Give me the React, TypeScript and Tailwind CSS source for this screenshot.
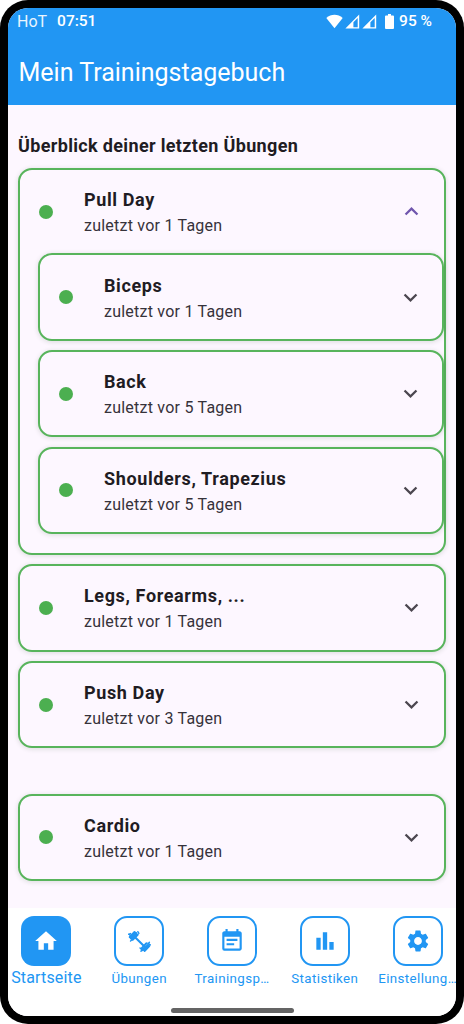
import React from "react";
import { MdBarChart, MdEventNote, MdExpandLess, MdExpandMore, MdHome, MdSettings } from "react-icons/md";

function Dumbbell() {
  return (
    <svg viewBox="0 0 24 24" className="h-[25px] w-[25px]" fill="none" stroke="currentColor" strokeLinecap="round">
      <path d="M7 7.2 17 17" strokeWidth="2" />
      <path d="M3.9 9.1 8.8 3.9M2.7 7.8 7.3 3M5.4 10.2 10.2 5.4" strokeWidth="2.1" />
      <path d="M2 5 3.7 6.6M10.4 2.6 11.4 4.2M1.6 5 3.4 4.4M3.4 11.5 4.8 10.3" strokeWidth="1.4" />
      <path d="M14 18.6 18.5 13.8M15.5 20 20.1 15.3M17 21 21.3 16.4" strokeWidth="2.1" />
      <path d="M13.4 21.4 14.4 20.1M21.5 12.8 20.4 14.1M12.5 18.3 15 20.5M20 13.7 22.4 15.3" strokeWidth="1.4" />
    </svg>
  );
}

function Signal() {
  return (
    <svg viewBox="0 0 15 15" className="h-[15px] w-[15px]" fill="currentColor">
      <path fillRule="evenodd" d="M.4 14.5 14.2.5v14H.4ZM8.4 8.2v5.1H12.7V4L8.4 8.2Z" />
    </svg>
  );
}

function StatusBar() {
  return (
    <div className="flex h-[26px] items-center pl-[9px] pr-[24px] text-white">
      <span className="relative top-px text-[16px] opacity-90">HoT</span>
      <span className="relative top-px ml-[10px] text-[15.5px] font-medium">07:51</span>
      <div className="ml-auto flex items-center">
        <svg viewBox="0 0 17 15" className="h-[15px] w-[17px]" fill="currentColor">
          <path d="M.3 4C5-.4 12-.4 16.7 4L8.5 14.3Z" />
        </svg>
        <span className="ml-[2px]"><Signal /></span>
        <span className="ml-[2px]"><Signal /></span>
        <svg viewBox="0 0 9 15" className="ml-[8px] h-[15px] w-[9px]" fill="currentColor">
          <path d="M3 0h3v1.5h2a1 1 0 0 1 1 1V14a1 1 0 0 1-1 1H1a1 1 0 0 1-1-1V2.5a1 1 0 0 1 1-1h2Z" />
        </svg>
        <span className="relative top-px ml-[5px] text-[15.5px] font-medium">95 %</span>
      </div>
    </div>
  );
}

type CardProps = { title: string; days: number; nested?: boolean; open?: boolean; children?: React.ReactNode };

function Card({ title, days, nested, open, children }: CardProps) {
  return (
    <section className="rounded-[14px] border-2 border-[#58b45c] bg-[#fdf7ff] shadow-[0_1px_4px_1px_rgba(0,50,0,0.10)]">
      <div className={`flex h-[83.4px] items-center pl-[19px] ${nested ? "pr-[18.5px]" : "pr-[19px]"}`}>
        <span className="h-[14px] w-[14px] shrink-0 rounded-full bg-[#4caf50]" />
        <div className="ml-[31px] flex-1 pt-[3px]">
          <h2 className="text-[18px] leading-[26px] font-bold tracking-[0.62px] text-[#1f1c23]">{title}</h2>
          <p className="text-[16px] leading-[26px] tracking-[0.23px] text-[#36323a]">zuletzt vor {days} Tagen</p>
        </div>
        {open
          ? <MdExpandLess className="text-[#6f55ad]" size={27} />
          : <MdExpandMore className="text-[#4b464f]" size={27} />}
      </div>
      {children}
    </section>
  );
}

function NavItem({ label, active, children }: { label: string; active?: boolean; children: React.ReactNode }) {
  return (
    <button className="flex min-w-0 flex-1 flex-col items-center text-[#2196f3]">
      <span className={active
        ? "flex h-[50px] w-[50px] items-center justify-center rounded-[13px] bg-[#2196f3] text-white"
        : "flex h-[50px] w-[50px] items-center justify-center rounded-[13px] border-2 border-[#2196f3] bg-white"}>
        {children}
      </span>
      <span className={active
        ? "mt-[2px] text-[16px] leading-[20px] tracking-[0.15px] whitespace-nowrap"
        : "mt-[3px] text-[13.3px] leading-[20px] tracking-[0.4px] whitespace-nowrap"}>
        {label}
      </span>
    </button>
  );
}

export default function App() {
  return (
    <div className="h-[1024px] w-[464px] bg-white font-[Roboto,sans-serif]">
      <div className="h-full rounded-[28px] bg-black p-2">
        <div className="flex h-full flex-col overflow-hidden rounded-[20px] bg-[#fdf7ff]">
          <header className="h-[97px] bg-[#2196f3] text-white">
            <StatusBar />
            <h1 className="pt-[22px] pl-[10.5px] text-[25px] leading-[34px]">Mein Trainingstagebuch</h1>
          </header>
          <main className="flex-1 pt-[28px] pr-[10px] pl-[10px]">
            <h2 className="mb-[9px] text-[18px] leading-[26px] font-bold tracking-[0.34px] text-[#1f1c23]">Überblick deiner letzten Übungen</h2>
            <div className="flex flex-col gap-[9.3px]">
              <Card title="Pull Day" days={1} open>
                <div className="flex flex-col gap-[9.3px] pb-[18.7px] pl-[18px]">
                  <Card title="Biceps" days={1} nested />
                  <Card title="Back" days={5} nested />
                  <Card title="Shoulders, Trapezius" days={5} nested />
                </div>
              </Card>
              <Card title="Legs, Forearms, ..." days={1} />
              <Card title="Push Day" days={3} />
            </div>
            <div className="mt-[45.5px]">
              <Card title="Cardio" days={1} />
            </div>
          </main>
          <nav className="-mx-2 flex h-[108px] shrink-0 flex-col bg-white pt-2">
            <div className="flex">
              <NavItem label="Startseite" active><MdHome size={26} /></NavItem>
              <NavItem label="Übungen"><Dumbbell /></NavItem>
              <NavItem label="Trainingsp…"><MdEventNote size={26} /></NavItem>
              <NavItem label="Statistiken"><MdBarChart size={26} /></NavItem>
              <NavItem label="Einstellung…"><MdSettings size={26} /></NavItem>
            </div>
            <div className="mx-auto mt-auto mb-[3px] h-[5px] w-[123px] rounded-full bg-[#646464]" />
          </nav>
        </div>
      </div>
    </div>
  );
}
